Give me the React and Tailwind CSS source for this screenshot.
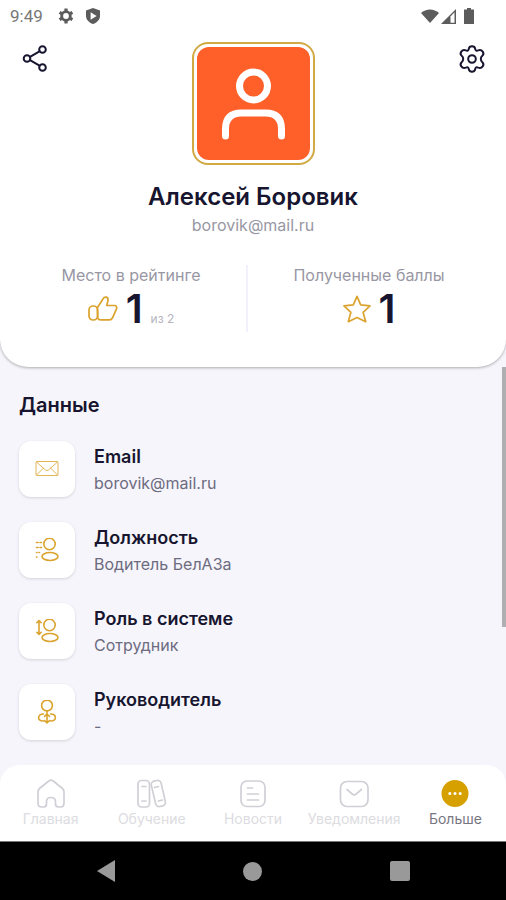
import { useState } from "react";

const line = {
  fill: "none",
  stroke: "currentColor",
  strokeLinecap: "round",
  strokeLinejoin: "round",
  "aria-hidden": true,
};

function StatusBar() {
  return (
    <div className="flex h-8 items-center justify-between pl-[10px] pr-8 text-[#5c5c5c]">
      <div className="flex items-center">
        <span className="font-[Roboto] text-[17px] leading-5 text-[#777777]">9:49</span>
        <svg className="ml-[15px] size-4" viewBox="0 0 16 16" aria-hidden="true">
          <circle cx="8" cy="8" r="4.3" fill="none" stroke="currentColor" strokeWidth="2.8" />
          <path d="M8 .6v3M8 12.4v3M1.6 4.3l2.6 1.5M11.8 10.2l2.6 1.5M1.6 11.7l2.6-1.5M11.8 5.8l2.6-1.5" stroke="currentColor" strokeWidth="3.2" />
        </svg>
        <svg className="ml-[11px] size-4" viewBox="0 0 16 16" aria-hidden="true">
          <path d="M8 0l7 2.6v5.2c0 3.9-2.9 7-7 8.2-4.1-1.2-7-4.3-7-8.2V2.6z" fill="currentColor" />
          <path d="M5.6 4.2v7.6l6-3.8z" fill="#ffffff" />
        </svg>
      </div>
      <div className="flex items-center">
        <svg className="h-[15px] w-[18px]" viewBox="0 0 18 15" aria-hidden="true">
          <path d="M9 14L0 4C5-.8 13-.8 18 4z" fill="currentColor" />
        </svg>
        <svg className="ml-[2px] size-[15px]" viewBox="0 0 15 15" aria-hidden="true">
          <path d="M0 15L15 0v15z" fill="currentColor" />
          <path d="M9.5 7.500l4-4.200v10.400h-4z" fill="#ffffff" />
        </svg>
        <svg className="ml-2 h-4 w-[10px]" viewBox="0 0 10 16" aria-hidden="true">
          <path d="M3 0h4v1.500h3V16H0V1.500h3z" fill="currentColor" />
        </svg>
      </div>
    </div>
  );
}

function ShareIcon() {
  return (
    <svg {...line} className="h-7 w-7" viewBox="0 0 28 28" strokeWidth="2">
      <circle cx="7" cy="13.500" r="3.300" />
      <circle cx="22.500" cy="4.500" r="3.300" />
      <circle cx="22.500" cy="22.500" r="3.300" />
      <path d="M10 11.800l9.500-5.500M10 15.200l9.500 5.500" />
    </svg>
  );
}

function GearIcon() {
  return (
    <svg {...line} className="h-7 w-7" viewBox="0 0 28 28" strokeWidth="2">
      <circle cx="14" cy="14" r="3.800" />
      <path d="M10.800 3.800C11.300 .3 16.700 .3 17.200 3.800C17.500 5.600 18.600 6.100 20.200 5.400C24 3.900 27 8.500 24.300 10.800C22.300 12.400 22.300 15.600 24.300 17.200C27 19.500 24 24.100 20.200 22.600C18.600 21.900 17.500 22.400 17.200 24.200C16.700 27.700 11.300 27.700 10.800 24.200C10.500 22.400 9.400 21.900 7.800 22.600C4 24.100 1 19.500 3.700 17.200C5.700 15.600 5.700 12.400 3.700 10.800C1 8.500 4 3.900 7.800 5.400C9.400 6.100 10.500 5.600 10.800 3.800z" />
    </svg>
  );
}

function LikeIcon() {
  return (
    <svg {...line} className="h-7 w-[30px] text-[#dba32e]" viewBox="0 0 30 28" strokeWidth="1.700">
      <rect x="1" y="11" width="8.500" height="14" rx="4" />
      <path d="M9.500 12.500L15 4C16.500 .8 20.500 1.800 20 5.300L18.800 10.500h7.400c2 0 3 1.600 2.300 3.400l-4 9c-.6 1.300-1.500 2-3 2h-9c-1.400 0-2.300-.8-2.700-2z" />
    </svg>
  );
}

function StarIcon() {
  return (
    <svg {...line} className="size-7 text-[#dba32e]" viewBox="0 0 28 28" strokeWidth="1.700">
      <path d="M14 1.300l3.700 8.600 9.300 1-6.900 6.400 2.600 9.400L14 22.500l-8.700 4.200 2.600-9.400L1 10.900l9.300-1z" />
    </svg>
  );
}

const fields = [
  {
    title: "Email",
    value: "borovik@mail.ru",
    icon: (
      <g strokeWidth="1" opacity=".8">
        <rect x="1" y="4.500" width="22" height="14" rx="1" />
        <path d="M1.500 5l9 8q1.500 1.300 3 0l9-8M1.500 18l7-7M22.500 18l-7-7" />
      </g>
    ),
  },
  {
    title: "Должность",
    value: "Водитель БелАЗа",
    icon: (
      <g strokeWidth="1.600">
        <circle cx="14.500" cy="6" r="5.700" />
        <ellipse cx="15" cy="18.500" rx="8" ry="4" />
        <path d="M1.500 4.500h1.500M5 4.500h1.500M1.500 9.500h1.500M5 9.500h1.500M1.500 14.500h.5M4 14.500h.5M1.500 19h.5" />
      </g>
    ),
  },
  {
    title: "Роль в системе",
    value: "Сотрудник",
    icon: (
      <g strokeWidth="1.600">
        <circle cx="14.500" cy="6" r="5.700" />
        <ellipse cx="15" cy="18.500" rx="8" ry="4" />
        <path d="M4 1.500v14M1.800 3.700L4 1.500l2.200 2.200M1.800 13.300L4 15.500l2.200-2.200" />
      </g>
    ),
  },
  {
    title: "Руководитель",
    value: "-",
    icon: (
      <g strokeWidth="1.600">
        <circle cx="12" cy="5.500" r="5.400" />
        <path d="M12 11V23M9.500 20.500L12 23l2.500-2.500M8.500 14c-6.500 0-6.500 7.500 0 7M15.500 14c6.500 0 6.500 7.500 0 7M9.500 16.500L12 14l2.500 2.500" />
      </g>
    ),
  },
];

const tabs = [
  {
    name: "Главная",
    icon: (
      <path d="M3.500 10.500L12.800 3q2.200-1.700 4.400 0l9.300 7.500q1.500 1.300 1.500 3.200v11.500q0 3.800-3.800 3.800h-1.700q-3 0-3-3v-2.500q0-4-4.500-4t-4.500 4V26q0 3-3 3H5.800Q2 29 2 25.200V13.700q0-1.900 1.500-3.200z" />
    ),
  },
  {
    name: "Обучение",
    icon: (
      <>
        <rect x="1" y="2.500" width="11.500" height="26.500" rx="3.500" />
        <rect x="16.500" y="2.500" width="10" height="26" rx="3.500" transform="rotate(-13 21.500 16)" />
        <path d="M5 8.500h4M5 23h4M17.500 9.500l4-1M21.500 23l4-1" />
      </>
    ),
  },
  {
    name: "Новости",
    icon: (
      <>
        <rect x="3" y="3" width="24" height="25.500" rx="6" />
        <path d="M9.500 10h5M9.500 16h11M9.500 22h11" />
      </>
    ),
  },
  {
    name: "Уведомления",
    icon: (
      <>
        <rect x="1.500" y="3.500" width="27.500" height="25" rx="6.500" />
        <path d="M8 11.500l5 4.400q2.200 1.900 4.400 0l5-4.400" />
      </>
    ),
  },
  {
    name: "Больше",
    icon: (
      <g stroke="none">
        <circle cx="15" cy="15.500" r="13.500" fill="#d6a000" />
        <circle cx="9.800" cy="15.500" r="1.500" fill="#ffffff" />
        <circle cx="15" cy="15.500" r="1.500" fill="#ffffff" />
        <circle cx="20.200" cy="15.500" r="1.500" fill="#ffffff" />
      </g>
    ),
  },
];

function App() {
  const [active, setActive] = useState("Больше");

  return (
    <div className="flex min-h-screen flex-col bg-[#f6f5fb] font-['Inter',sans-serif] text-[#17152f]">
      <header className="rounded-b-[28px] bg-white pb-[34px] shadow-[0_1px_3px_rgba(0,0,0,0.3)]">
        <StatusBar />

        <div className="flex items-start justify-between px-5 pt-[10px]">
          <button type="button" aria-label="Поделиться" className="mt-[3px]">
            <ShareIcon />
          </button>
          <div className="size-[123px] rounded-2xl border-2 border-[#d2aa43] bg-white p-[3px]">
            <div className="flex size-full items-center justify-center rounded-xl bg-[#ff6029]">
              <svg {...line} className="size-[74px] text-white" viewBox="0 0 74 74" strokeWidth="7">
                <circle cx="37.500" cy="19" r="14" />
                <path d="M9.500 69V62Q9.500 46 25.500 46H49.500Q65.500 46 65.500 62V69" />
              </svg>
            </div>
          </div>
          <button type="button" aria-label="Настройки" className="mt-[3px]">
            <GearIcon />
          </button>
        </div>

        <div className="mt-4 text-center">
          <h1 className="text-[24px] font-semibold leading-8">Алексей Боровик</h1>
          <p className="text-[16px] leading-6 text-[#9897a4]">borovik@mail.ru</p>
        </div>

        <div className="mt-7 grid grid-cols-[232fr_242fr] px-4 text-center">
          <div className="h-[67px] border-r-2 border-[#f1f1fb]">
            <p className="text-[16px] leading-5 text-[#9897a4]">Место в рейтинге</p>
            <div className="flex items-center justify-center">
              <LikeIcon />
              <span className="ml-2 text-[40px] font-semibold leading-[48px]">1</span>
              <span className="ml-2 self-end pb-[6px] text-[12px] leading-4 text-[#b5b4be]">из 2</span>
            </div>
          </div>
          <div>
            <p className="text-[16px] leading-5 text-[#9897a4]">Полученные баллы</p>
            <div className="flex items-center justify-center">
              <StarIcon />
              <span className="ml-2 text-[40px] font-semibold leading-[48px]">1</span>
            </div>
          </div>
        </div>
      </header>

      <main className="relative flex-1 px-[19px] pb-6 pt-6">
        <h2 className="text-[20px] font-semibold leading-7">Данные</h2>
        <ul className="mt-[22px] space-y-[25px]">
          {fields.map((field) => (
            <li key={field.title} className="flex items-center">
              <div className="flex size-14 items-center justify-center rounded-xl bg-white text-[#dba32e] shadow-[0_1px_3px_rgba(0,0,0,0.14)]">
                <svg {...line} className="size-6" viewBox="0 0 24 24">
                  {field.icon}
                </svg>
              </div>
              <div className="ml-[19px]">
                <h3 className="text-[18px] font-semibold leading-7">{field.title}</h3>
                <p className="text-[16px] leading-6 text-[#6c6b80]">{field.value}</p>
              </div>
            </li>
          ))}
        </ul>
        {/* scroll thumb */}
        <div className="absolute right-0 top-0 h-[260px] w-1 bg-[#afafb1]" />
      </main>

      <nav className="grid grid-cols-5 rounded-t-[20px] bg-white pb-3 pt-3">
        {tabs.map((tab) => (
          <button
            key={tab.name}
            type="button"
            onClick={() => setActive(tab.name)}
            className="flex flex-col items-center text-[#cfcfd6]"
          >
            <svg {...line} className="size-8" viewBox="-1 -1 32 32" strokeWidth="1.700">
              {tab.icon}
            </svg>
            <span className={tab.name === active ? "text-[14px] leading-5 text-[#77767f]" : "text-[14px] leading-5 text-[#dcdce1]"}>
              {tab.name}
            </span>
          </button>
        ))}
      </nav>

      <div className="grid h-[59px] grid-cols-3 border-t border-[#777777] bg-black px-8 text-[#999999]">
        <button type="button" aria-label="Назад" className="flex items-center justify-center">
          <svg className="h-[22px] w-[18px]" viewBox="0 0 18 22" aria-hidden="true">
            <path d="M18 0v22L0 11z" fill="currentColor" />
          </svg>
        </button>
        <button type="button" aria-label="Домой" className="flex items-center justify-center">
          <span className="size-[19px] rounded-full bg-[#999999]" />
        </button>
        <button type="button" aria-label="Недавние" className="flex items-center justify-center">
          <span className="size-5 rounded-xs bg-[#999999]" />
        </button>
      </div>
    </div>
  );
}

export default App;
